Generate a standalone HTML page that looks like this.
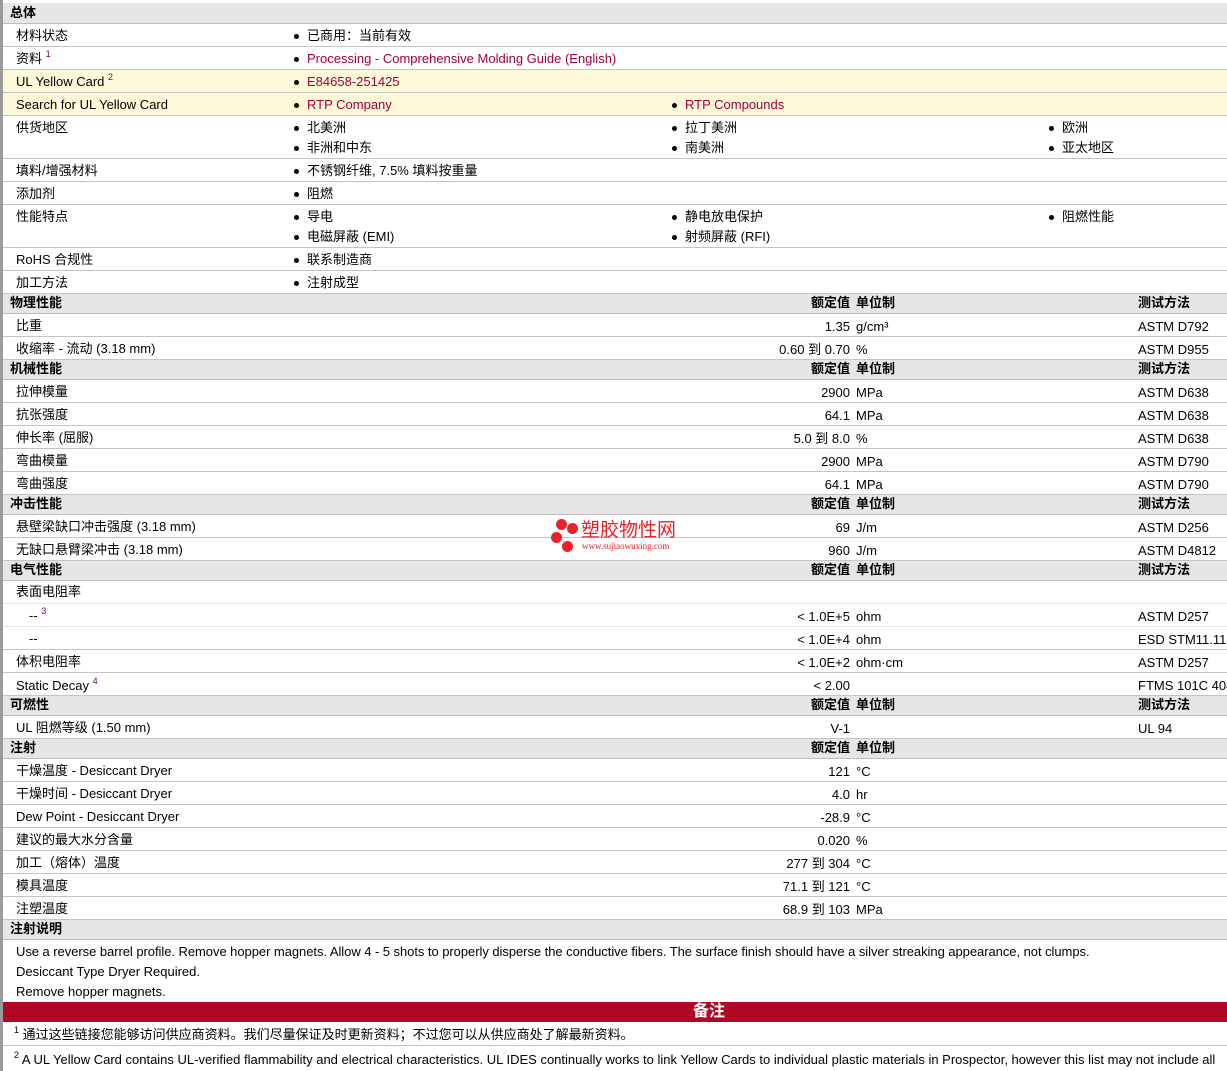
<!DOCTYPE html>
<html><head><meta charset="utf-8"><style>
body{margin:0;width:1227px;height:1071px;overflow:hidden;background:#fff;font-family:"Liberation Sans","Noto Sans CJK SC",sans-serif;font-size:13px;color:#000;position:relative}
.r{position:absolute;left:3px;right:0;border-bottom:1px solid #c4c4c4;box-sizing:border-box}
.s{border-bottom-color:#e6e6e6}
.h{background:#e6e6e6;font-weight:bold;border-bottom:1px solid #bdbdbd}
.y{background:#fdf9d8}
.t{position:absolute;white-space:nowrap;line-height:16px;margin-top:1px}
.v{position:absolute;right:377px;white-space:nowrap;line-height:16px;text-align:right;margin-top:1px}
.h .t,.h .v{margin-top:0}
.b::before{content:"";position:absolute;left:-13px;top:6px;width:5px;height:5px;border-radius:50%;background:#000}
a{color:#a0003a;text-decoration:none}
sup{font-size:9px;vertical-align:6px;line-height:0}
#lb{position:absolute;left:0;top:0;width:3px;height:1071px;background:#9a9a9a}
</style></head><body>
<div id="lb"></div>
<div class="r h" style="top:3px;height:21px"><span class="t" style="left:7px;top:2px">总体</span></div>
<div class="r" style="top:24px;height:23px"><span class="t" style="left:13px;top:3px">材料状态</span><span class="t b" style="left:304px;top:3px">已商用：当前有效</span></div>
<div class="r" style="top:47px;height:23px"><span class="t" style="left:13px;top:3px">资料 <sup style="color:#606">1</sup></span><span class="t b" style="left:304px;top:3px"><a>Processing - Comprehensive Molding Guide (English)</a></span></div>
<div class="r y" style="top:70px;height:23px"><span class="t" style="left:13px;top:3px">UL Yellow Card <sup style="color:#606">2</sup></span><span class="t b" style="left:304px;top:3px"><a>E84658-251425</a></span></div>
<div class="r y" style="top:93px;height:23px"><span class="t" style="left:13px;top:3px">Search for UL Yellow Card</span><span class="t b" style="left:304px;top:3px"><a>RTP Company</a></span><span class="t b" style="left:682px;top:3px"><a>RTP Compounds</a></span></div>
<div class="r" style="top:116px;height:43px"><span class="t" style="left:13px;top:3px">供货地区</span><span class="t b" style="left:304px;top:3px">北美洲</span><span class="t b" style="left:682px;top:3px">拉丁美洲</span><span class="t b" style="left:1059px;top:3px">欧洲</span><span class="t b" style="left:304px;top:23px">非洲和中东</span><span class="t b" style="left:682px;top:23px">南美洲</span><span class="t b" style="left:1059px;top:23px">亚太地区</span></div>
<div class="r" style="top:159px;height:23px"><span class="t" style="left:13px;top:3px">填料/增强材料</span><span class="t b" style="left:304px;top:3px">不锈钢纤维, 7.5% 填料按重量</span></div>
<div class="r" style="top:182px;height:23px"><span class="t" style="left:13px;top:3px">添加剂</span><span class="t b" style="left:304px;top:3px">阻燃</span></div>
<div class="r" style="top:205px;height:43px"><span class="t" style="left:13px;top:3px">性能特点</span><span class="t b" style="left:304px;top:3px">导电</span><span class="t b" style="left:682px;top:3px">静电放电保护</span><span class="t b" style="left:1059px;top:3px">阻燃性能</span><span class="t b" style="left:304px;top:23px">电磁屏蔽 (EMI)</span><span class="t b" style="left:682px;top:23px">射频屏蔽 (RFI)</span></div>
<div class="r" style="top:248px;height:23px"><span class="t" style="left:13px;top:3px">RoHS 合规性</span><span class="t b" style="left:304px;top:3px">联系制造商</span></div>
<div class="r" style="top:271px;height:23px"><span class="t" style="left:13px;top:3px">加工方法</span><span class="t b" style="left:304px;top:3px">注射成型</span></div>

<div class="r h" style="top:294px;height:20px"><span class="t" style="left:7px;top:1px">物理性能</span><span class="v" style="top:1px">额定值</span><span class="t" style="left:853px;top:1px">单位制</span><span class="t" style="left:1135px;top:1px">测试方法</span></div>
<div class="r" style="top:314px;height:23px"><span class="t" style="left:13px;top:3px">比重</span><span class="v" style="top:4px">1.35</span><span class="t" style="left:853px;top:4px">g/cm³</span><span class="t" style="left:1135px;top:4px">ASTM D792</span></div>
<div class="r" style="top:337px;height:23px"><span class="t" style="left:13px;top:3px">收缩率 - 流动 (3.18 mm)</span><span class="v" style="top:4px">0.60 到 0.70</span><span class="t" style="left:853px;top:4px">%</span><span class="t" style="left:1135px;top:4px">ASTM D955</span></div>

<div class="r h" style="top:360px;height:20px"><span class="t" style="left:7px;top:1px">机械性能</span><span class="v" style="top:1px">额定值</span><span class="t" style="left:853px;top:1px">单位制</span><span class="t" style="left:1135px;top:1px">测试方法</span></div>
<div class="r" style="top:380px;height:23px"><span class="t" style="left:13px;top:3px">拉伸模量</span><span class="v" style="top:4px">2900</span><span class="t" style="left:853px;top:4px">MPa</span><span class="t" style="left:1135px;top:4px">ASTM D638</span></div>
<div class="r" style="top:403px;height:23px"><span class="t" style="left:13px;top:3px">抗张强度</span><span class="v" style="top:4px">64.1</span><span class="t" style="left:853px;top:4px">MPa</span><span class="t" style="left:1135px;top:4px">ASTM D638</span></div>
<div class="r" style="top:426px;height:23px"><span class="t" style="left:13px;top:3px">伸长率 (屈服)</span><span class="v" style="top:4px">5.0 到 8.0</span><span class="t" style="left:853px;top:4px">%</span><span class="t" style="left:1135px;top:4px">ASTM D638</span></div>
<div class="r" style="top:449px;height:23px"><span class="t" style="left:13px;top:3px">弯曲模量</span><span class="v" style="top:4px">2900</span><span class="t" style="left:853px;top:4px">MPa</span><span class="t" style="left:1135px;top:4px">ASTM D790</span></div>
<div class="r" style="top:472px;height:23px"><span class="t" style="left:13px;top:3px">弯曲强度</span><span class="v" style="top:4px">64.1</span><span class="t" style="left:853px;top:4px">MPa</span><span class="t" style="left:1135px;top:4px">ASTM D790</span></div>

<div class="r h" style="top:495px;height:20px"><span class="t" style="left:7px;top:1px">冲击性能</span><span class="v" style="top:1px">额定值</span><span class="t" style="left:853px;top:1px">单位制</span><span class="t" style="left:1135px;top:1px">测试方法</span></div>
<div class="r" style="top:515px;height:23px"><span class="t" style="left:13px;top:3px">悬壁梁缺口冲击强度 (3.18 mm)</span><span class="v" style="top:4px">69</span><span class="t" style="left:853px;top:4px">J/m</span><span class="t" style="left:1135px;top:4px">ASTM D256</span></div>
<div class="r" style="top:538px;height:23px"><span class="t" style="left:13px;top:3px">无缺口悬臂梁冲击 (3.18 mm)</span><span class="v" style="top:4px">960</span><span class="t" style="left:853px;top:4px">J/m</span><span class="t" style="left:1135px;top:4px">ASTM D4812</span></div>

<div class="r h" style="top:561px;height:20px"><span class="t" style="left:7px;top:1px">电气性能</span><span class="v" style="top:1px">额定值</span><span class="t" style="left:853px;top:1px">单位制</span><span class="t" style="left:1135px;top:1px">测试方法</span></div>
<div class="r s" style="top:581px;height:23px"><span class="t" style="left:13px;top:2px">表面电阻率</span></div>
<div class="r s" style="top:604px;height:23px"><span class="t" style="left:26px;top:3px">-- <sup style="color:#606">3</sup></span><span class="v" style="top:4px">&lt; 1.0E+5</span><span class="t" style="left:853px;top:4px">ohm</span><span class="t" style="left:1135px;top:4px">ASTM D257</span></div>
<div class="r" style="top:627px;height:23px"><span class="t" style="left:26px;top:3px">--</span><span class="v" style="top:4px">&lt; 1.0E+4</span><span class="t" style="left:853px;top:4px">ohm</span><span class="t" style="left:1135px;top:4px">ESD STM11.11</span></div>
<div class="r" style="top:650px;height:23px"><span class="t" style="left:13px;top:3px">体积电阻率</span><span class="v" style="top:4px">&lt; 1.0E+2</span><span class="t" style="left:853px;top:4px">ohm·cm</span><span class="t" style="left:1135px;top:4px">ASTM D257</span></div>
<div class="r" style="top:673px;height:23px"><span class="t" style="left:13px;top:4px">Static Decay <sup style="color:#606">4</sup></span><span class="v" style="top:4px">&lt; 2.00</span><span class="t" style="left:1135px;top:4px">FTMS 101C 4046</span></div>

<div class="r h" style="top:696px;height:20px"><span class="t" style="left:7px;top:1px">可燃性</span><span class="v" style="top:1px">额定值</span><span class="t" style="left:853px;top:1px">单位制</span><span class="t" style="left:1135px;top:1px">测试方法</span></div>
<div class="r" style="top:716px;height:23px"><span class="t" style="left:13px;top:3px">UL 阻燃等级 (1.50 mm)</span><span class="v" style="top:4px">V-1</span><span class="t" style="left:1135px;top:4px">UL 94</span></div>

<div class="r h" style="top:739px;height:20px"><span class="t" style="left:7px;top:1px">注射</span><span class="v" style="top:1px">额定值</span><span class="t" style="left:853px;top:1px">单位制</span></div>
<div class="r" style="top:759px;height:23px"><span class="t" style="left:13px;top:3px">干燥温度 - Desiccant Dryer</span><span class="v" style="top:4px">121</span><span class="t" style="left:853px;top:4px">°C</span></div>
<div class="r" style="top:782px;height:23px"><span class="t" style="left:13px;top:3px">干燥时间 - Desiccant Dryer</span><span class="v" style="top:4px">4.0</span><span class="t" style="left:853px;top:4px">hr</span></div>
<div class="r" style="top:805px;height:23px"><span class="t" style="left:13px;top:3px">Dew Point - Desiccant Dryer</span><span class="v" style="top:4px">-28.9</span><span class="t" style="left:853px;top:4px">°C</span></div>
<div class="r" style="top:828px;height:23px"><span class="t" style="left:13px;top:3px">建议的最大水分含量</span><span class="v" style="top:4px">0.020</span><span class="t" style="left:853px;top:4px">%</span></div>
<div class="r" style="top:851px;height:23px"><span class="t" style="left:13px;top:3px">加工（熔体）温度</span><span class="v" style="top:4px">277 到 304</span><span class="t" style="left:853px;top:4px">°C</span></div>
<div class="r" style="top:874px;height:23px"><span class="t" style="left:13px;top:3px">模具温度</span><span class="v" style="top:4px">71.1 到 121</span><span class="t" style="left:853px;top:4px">°C</span></div>
<div class="r" style="top:897px;height:23px"><span class="t" style="left:13px;top:3px">注塑温度</span><span class="v" style="top:4px">68.9 到 103</span><span class="t" style="left:853px;top:4px">MPa</span></div>

<div class="r h" style="top:920px;height:20px"><span class="t" style="left:7px;top:1px">注射说明</span></div>
<div class="r" style="top:940px;height:62px;border:none"><span class="t" style="left:13px;top:3px;letter-spacing:-0.05px">Use a reverse barrel profile. Remove hopper magnets. Allow 4 - 5 shots to properly disperse the conductive fibers. The surface finish should have a silver streaking appearance, not clumps.</span><span class="t" style="left:13px;top:23px">Desiccant Type Dryer Required.</span><span class="t" style="left:13px;top:43px">Remove hopper magnets.</span></div>
<div class="r" style="top:1002px;height:20px;background:#b00824;border:none;color:#fff;font-weight:bold;font-size:16px"><span style="position:absolute;left:690px;top:0;line-height:20px">备注</span></div>
<div class="r" style="top:1022px;height:24px"><span class="t" style="left:11px;top:4px"><sup>1</sup> 通过这些链接您能够访问供应商资料。我们尽量保证及时更新资料；不过您可以从供应商处了解最新资料。</span></div>
<div class="r" style="top:1046px;height:25px;border:none"><span class="t" style="left:11px;top:5px"><sup>2</sup> A UL Yellow Card contains UL-verified flammability and electrical characteristics. UL IDES continually works to link Yellow Cards to individual plastic materials in Prospector, however this list may not include all</span></div>

<div style="position:absolute;left:551px;top:518px;width:140px;height:34px">
<div style="position:absolute;left:5px;top:1px;width:11px;height:11px;border-radius:50%;background:#e8202a"></div>
<div style="position:absolute;left:16px;top:5px;width:11px;height:11px;border-radius:50%;background:#e8202a"></div>
<div style="position:absolute;left:0px;top:14px;width:11px;height:11px;border-radius:50%;background:#e8202a"></div>
<div style="position:absolute;left:11px;top:23px;width:11px;height:11px;border-radius:50%;background:#e8202a"></div>
<span style="position:absolute;left:30px;top:3px;color:#e8202a;font-size:19px;line-height:20px;white-space:nowrap">塑胶物性网</span>
<span style="position:absolute;left:31px;top:24px;color:#e8202a;font-size:9px;line-height:9px;font-family:'Liberation Serif',serif;white-space:nowrap">www.sujiaowuxing.com</span>
</div>
</body></html>
